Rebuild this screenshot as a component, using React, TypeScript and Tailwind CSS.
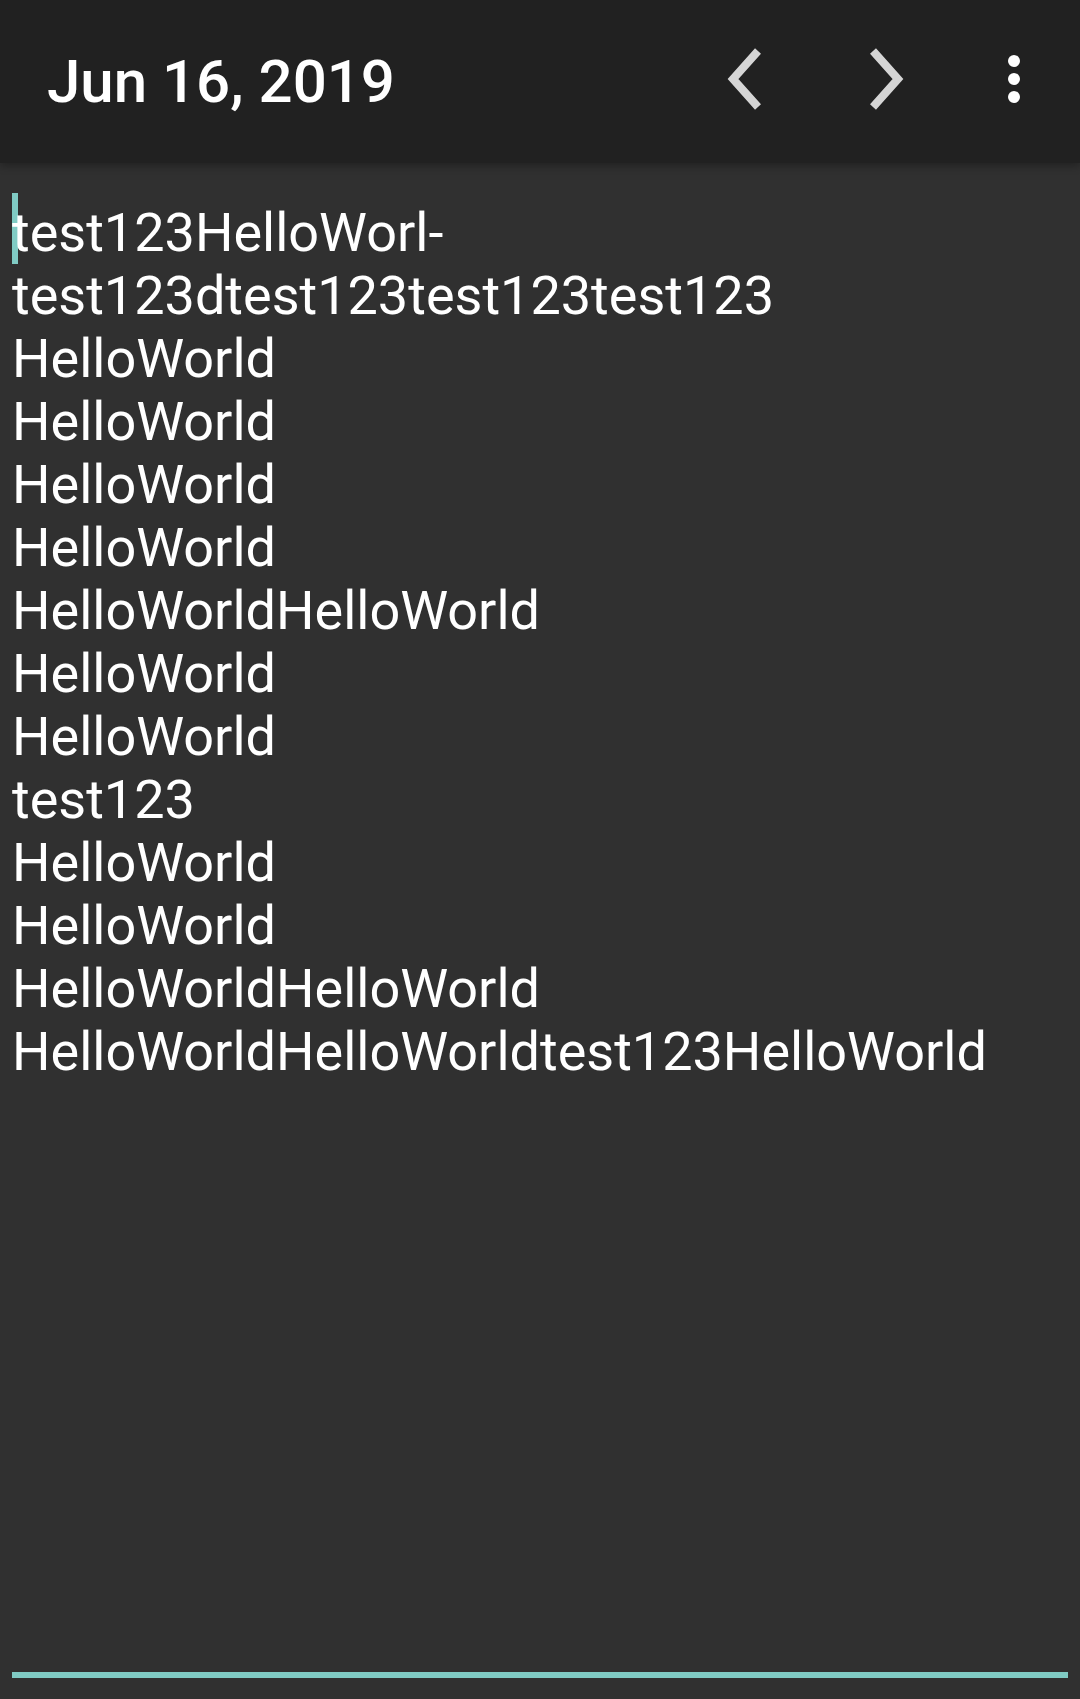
import React from 'react';

// note lines as the editor shows them (Android hyphenated the first word)
const lines = [
  'test123HelloWorl-',
  'test123dtest123test123test123',
  'HelloWorld',
  'HelloWorld',
  'HelloWorld',
  'HelloWorld',
  'HelloWorldHelloWorld',
  'HelloWorld',
  'HelloWorld',
  'test123',
  'HelloWorld',
  'HelloWorld',
  'HelloWorldHelloWorld',
  'HelloWorldHelloWorldtest123HelloWorld',
];

function ChevronLeft() {
  return (
    <svg width="72" height="72" viewBox="0 0 72 72">
      <polyline
        points="52,8 27,36 52,64"
        fill="none"
        stroke="#d5d5d5"
        strokeWidth="8"
        strokeLinejoin="miter"
        strokeLinecap="butt"
      />
    </svg>
  );
}

function ChevronRight() {
  return (
    <svg width="72" height="72" viewBox="0 0 72 72">
      <polyline
        points="21,8 46,36 21,64"
        fill="none"
        stroke="#d5d5d5"
        strokeWidth="8"
        strokeLinejoin="miter"
        strokeLinecap="butt"
      />
    </svg>
  );
}

function MoreVert() {
  return (
    <svg width="72" height="72" viewBox="0 0 72 72">
      <circle cx="36" cy="18" r="6" fill="#ffffff" />
      <circle cx="36" cy="36" r="6" fill="#ffffff" />
      <circle cx="36" cy="54" r="6" fill="#ffffff" />
    </svg>
  );
}

export default function App() {
  return (
    <div
      className="flex h-[1699px] w-[1080px] flex-col overflow-hidden bg-[#303030]"
      style={{ fontFamily: 'Roboto, "Noto Sans", sans-serif' }}
    >
      {/* Toolbar */}
      <div className="relative z-10 flex h-[163px] shrink-0 items-start bg-[#212121] shadow-[0_3px_8px_rgba(0,0,0,0.3)]">
        <div className="mt-[52px] pl-[47px] text-[60px] leading-[60px] font-medium text-white">
          Jun 16, 2019
        </div>
        <div className="flex-1" />
        <div className="mt-[43px] flex pr-[30px]">
          <button className="h-[72px] w-[72px]">
            <ChevronLeft />
          </button>
          <button className="ml-[74px] h-[72px] w-[72px]">
            <ChevronRight />
          </button>
          <button className="ml-[54px] h-[72px] w-[72px]">
            <MoreVert />
          </button>
        </div>
      </div>

      {/* Editor */}
      <div className="relative flex flex-1 flex-col">
        <div className="absolute left-[12px] top-[30px] h-[71px] w-[6px] bg-[#80cbc4]" />
        <div className="relative flex-1 pl-[12px] pt-[38px] text-[54px] leading-[63px] text-white">
          {lines.map((line, i) => (
            <div key={i} className="whitespace-nowrap">
              {line}
            </div>
          ))}
        </div>
        <div className="mx-[12px] mb-[21px] h-[6px] bg-[#80cbc4]" />
      </div>
    </div>
  );
}
